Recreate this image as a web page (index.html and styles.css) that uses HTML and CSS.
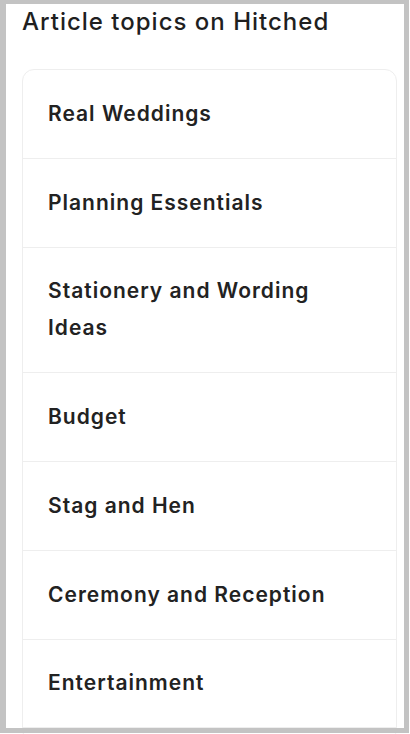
FILE: index.html
```html
<!DOCTYPE html>
<html lang="en">
<head>
<meta charset="utf-8">
<title>Article topics on Hitched</title>
<link rel="stylesheet" href="styles.css">
</head>
<body>
<main class="page">
  <h2 class="title">Article topics on Hitched</h2>
  <ul class="topics">
    <li class="topic"><a href="#">Real Weddings</a></li>
    <li class="topic"><a href="#">Planning Essentials</a></li>
    <li class="topic"><a href="#">Stationery and Wording Ideas</a></li>
    <li class="topic"><a href="#">Budget</a></li>
    <li class="topic"><a href="#">Stag and Hen</a></li>
    <li class="topic"><a href="#">Ceremony and Reception</a></li>
    <li class="topic"><a href="#">Entertainment</a></li>
  </ul>
</main>
<div class="frame"></div>
</body>
</html>
```
FILE: styles.css
```css
html, body {
  margin: 0;
  padding: 0;
  background: #ffffff;
}
body {
  font-family: Inter, "Open Sans", "Liberation Sans", sans-serif;
  color: #222222;
  overflow: hidden;
}
.page {
  padding: 6px 0 0 22px;
}
.title {
  margin: 0;
  font-size: 24px;
  font-weight: 500;
  line-height: 32px;
  letter-spacing: 1px;
  color: #1f1f1f;
}
.topics {
  list-style: none;
  margin: 31px 0 0 0;
  padding: 0 0 12px 0;
  width: 373px;
  border: 1px solid #eeeeee;
  border-radius: 12px;
}
.topic {
  border-bottom: 1px solid #eeeeee;
  padding: 24.75px 60px 26px 25px;
  font-size: 21px;
  font-weight: 600;
  line-height: 37px;
  letter-spacing: 1px;
}
.topic a {
  color: #222222;
  text-decoration: none;
}
.frame {
  position: fixed;
  left: 0;
  top: 0;
  width: 398px;
  height: 724px;
  border-style: solid;
  border-color: #c3c3c3;
  border-width: 4px 5px 5px 6px;
  pointer-events: none;
}
```
